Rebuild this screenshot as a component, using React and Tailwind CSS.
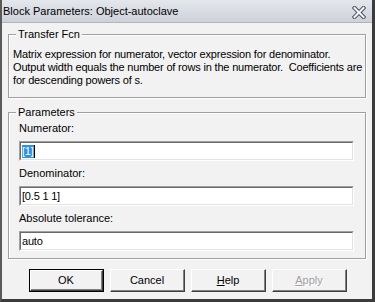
import React from "react";

function Field({ children }) {
  return (
    <div className="h-5 border-t border-l border-t-[#a0a0a0] border-l-[#a0a0a0] border-b border-r border-b-white border-r-white">
      <div className="h-full border-t border-l border-t-[#696969] border-l-[#696969] border-b border-r border-b-[#e3e3e3] border-r-[#e3e3e3] bg-white pl-[1px] flex items-center text-[11px] leading-[13px] tracking-[-0.2px] text-black">
        {children}
      </div>
    </div>
  );
}

function Btn({ children, primary, disabled }) {
  return (
    <div className={"w-[75px] h-[23px] " + (primary ? "border border-black" : "")}>
      <div className="h-full border-t border-l border-t-white border-l-white border-b border-r border-b-[#404040] border-r-[#404040]">
        <div className="h-full border-b border-r border-b-[#808080] border-r-[#808080] bg-[#f2f2f2] flex items-center justify-center text-[11px] leading-[13px]">
          <span className={disabled ? "text-[#a0a0a0] [text-shadow:1px_1px_0_white]" : "text-black"}>{children}</span>
        </div>
      </div>
    </div>
  );
}

export default function App() {
  return (
    <div
      className="w-[375px] h-[302px] bg-[#f2f2f2] border-l-2 border-l-[#5a5a5a] border-r-[3px] border-r-[#3c3c3c] border-b-[3px] border-b-[#3c3c3c] flex flex-col"
      style={{ fontFamily: '"Liberation Sans", Arial, sans-serif' }}
    >
      <div className="h-[23px] shrink-0 bg-gradient-to-b from-[#e4e7ec] to-[#cdd1d9] border-b border-b-[#b4b4b4] flex items-center justify-between pl-[1px] pr-[6px]">
        <span className="text-[11px] leading-[14px] text-black">Block Parameters: Object-autoclave</span>
        <svg width="14" height="13" viewBox="0 0 14 13" className="mt-[2px]">
          <path d="M2.5 2 L11.5 11 M11.5 2 L2.5 11" stroke="#4a5060" strokeWidth="4" strokeLinecap="square" />
          <path d="M2.5 2 L11.5 11 M11.5 2 L2.5 11" stroke="#f4f5f8" strokeWidth="2" strokeLinecap="square" />
        </svg>
      </div>

      <div className="flex flex-col px-[6px] pt-[11px]">
        <div className="relative h-[64px] border border-[#a0a0a0] shadow-[inset_1px_1px_0_white,1px_1px_0_white] pt-[13px] pl-[4px]">
          <span className="absolute -top-[7px] left-[7px] px-[2px] bg-[#f2f2f2] text-[11px] leading-[13px] text-black">Transfer Fcn</span>
          <p className="text-[11px] leading-[13px] tracking-[-0.18px] text-black whitespace-pre">
            {"Matrix expression for numerator, vector expression for denominator.\nOutput width equals the number of rows in the numerator.  Coefficients are\nfor descending powers of s."}
          </p>
        </div>

        <div className="relative mt-[14px] border border-[#a0a0a0] shadow-[inset_1px_1px_0_white,1px_1px_0_white] pt-[9px] pl-[10px] pr-[11px] pb-[7px] flex flex-col">
          <span className="absolute -top-[7px] left-[7px] px-[2px] bg-[#f2f2f2] text-[11px] leading-[13px] text-black">Parameters</span>
          <div className="text-[11px] leading-[13px] text-black">Numerator:</div>
          <div className="mt-[6px]">
            <Field>
              <span className="bg-[#3390d9] text-white">[1]</span>
              <span className="w-px h-[13px] bg-black" />
            </Field>
          </div>
          <div className="mt-[6px] text-[11px] leading-[13px] text-black">Denominator:</div>
          <div className="mt-[6px]">
            <Field>[0.5 1 1]</Field>
          </div>
          <div className="mt-[6px] text-[11px] leading-[13px] text-black">Absolute tolerance:</div>
          <div className="mt-[6px]">
            <Field>auto</Field>
          </div>
        </div>

        <div className="mt-[10px] flex gap-[6px] pl-[21px]">
          <Btn primary>OK</Btn>
          <Btn>Cancel</Btn>
          <Btn><span className="underline">H</span>elp</Btn>
          <Btn disabled><span className="underline">A</span>pply</Btn>
        </div>
      </div>
    </div>
  );
}
